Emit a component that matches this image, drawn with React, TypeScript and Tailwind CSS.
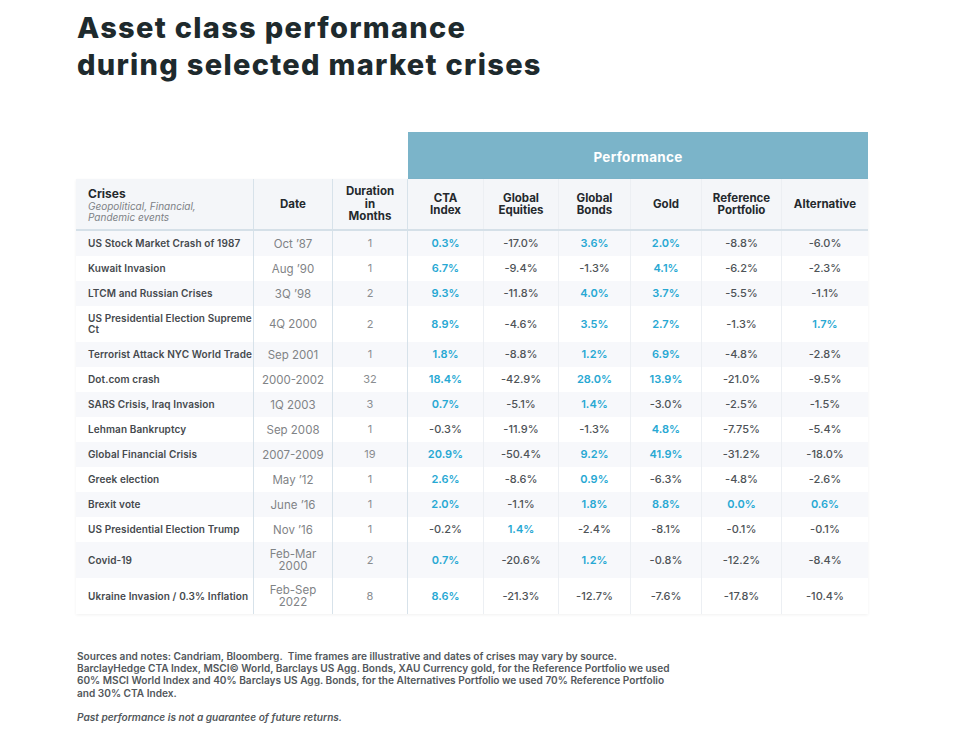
import React from 'react';

type Row = {
  name: string[];
  date: string[];
  months: string;
  values: string[];
  tall?: boolean;
};

const rows: Row[] = [
  { name: ['US Stock Market Crash of 1987'], date: ['Oct ’87'], months: '1', values: ['0.3%', '-17.0%', '3.6%', '2.0%', '-8.8%', '-6.0%'] },
  { name: ['Kuwait Invasion'], date: ['Aug ’90'], months: '1', values: ['6.7%', '-9.4%', '-1.3%', '4.1%', '-6.2%', '-2.3%'] },
  { name: ['LTCM and Russian Crises'], date: ['3Q ’98'], months: '2', values: ['9.3%', '-11.8%', '4.0%', '3.7%', '-5.5%', '-1.1%'] },
  { name: ['US Presidential Election Supreme', 'Ct'], date: ['4Q 2000'], months: '2', values: ['8.9%', '-4.6%', '3.5%', '2.7%', '-1.3%', '1.7%'], tall: true },
  { name: ['Terrorist Attack NYC World Trade'], date: ['Sep 2001'], months: '1', values: ['1.8%', '-8.8%', '1.2%', '6.9%', '-4.8%', '-2.8%'] },
  { name: ['Dot.com crash'], date: ['2000-2002'], months: '32', values: ['18.4%', '-42.9%', '28.0%', '13.9%', '-21.0%', '-9.5%'] },
  { name: ['SARS Crisis, Iraq Invasion'], date: ['1Q 2003'], months: '3', values: ['0.7%', '-5.1%', '1.4%', '-3.0%', '-2.5%', '-1.5%'] },
  { name: ['Lehman Bankruptcy'], date: ['Sep 2008'], months: '1', values: ['-0.3%', '-11.9%', '-1.3%', '4.8%', '-7.75%', '-5.4%'] },
  { name: ['Global Financial Crisis'], date: ['2007-2009'], months: '19', values: ['20.9%', '-50.4%', '9.2%', '41.9%', '-31.2%', '-18.0%'] },
  { name: ['Greek election'], date: ['May ’12'], months: '1', values: ['2.6%', '-8.6%', '0.9%', '-6.3%', '-4.8%', '-2.6%'] },
  { name: ['Brexit vote'], date: ['June ’16'], months: '1', values: ['2.0%', '-1.1%', '1.8%', '8.8%', '0.0%', '0.6%'] },
  { name: ['US Presidential Election Trump'], date: ['Nov ’16'], months: '1', values: ['-0.2%', '1.4%', '-2.4%', '-8.1%', '-0.1%', '-0.1%'] },
  { name: ['Covid-19'], date: ['Feb-Mar', '2000'], months: '2', values: ['0.7%', '-20.6%', '1.2%', '-0.8%', '-12.2%', '-8.4%'], tall: true },
  { name: ['Ukraine Invasion / 0.3% Inflation'], date: ['Feb-Sep', '2022'], months: '8', values: ['8.6%', '-21.3%', '-12.7%', '-7.6%', '-17.8%', '-10.4%'], tall: true },
];

const perfHeads = [
  ['CTA', 'Index'],
  ['Global', 'Equities'],
  ['Global', 'Bonds'],
  ['Gold'],
  ['Reference', 'Portfolio'],
  ['Alternative'],
];

const grid = 'grid grid-cols-[178px_79px_75px_76px_75px_72px_71px_80px_86px]';
const major = 'border-r border-[#d7e2ea]';
const minor = 'border-r border-[#eceff3]';

export default function App() {
  return (
    <div className="w-[960px] h-[747px] bg-white font-['Inter',sans-serif] overflow-hidden">
      {/* Title */}
      <h1 className="pl-[77px] pt-[9px] text-[29px] leading-[37px] font-extrabold tracking-[1.3px] text-[#1e2a2d]">
        Asset class performance
        <br />
        during selected market crises
      </h1>

      {/* Table */}
      <div className="ml-[76px] mt-[49px] w-[792px]">
        <div className="ml-[332px] h-[47px] bg-[#7bb4c9] flex items-center justify-center pt-[3px] text-[13.5px] font-bold tracking-[0.3px] text-white">
          Performance
        </div>
        <div className="shadow-[0_1px_3px_rgba(0,0,0,0.06)]">
          <div className={`${grid} h-[52px] bg-[#f4f6f9] border-b-2 border-[#d5e0e8] text-[11.5px] leading-[12.5px] font-bold text-[#24292d]`}>
            <div className={`${major} pl-3 pt-[3px] flex flex-col justify-center`}>
              <div className="text-[12px]">Crises</div>
              <div className="text-[10px] leading-[11px] font-normal italic text-[#7d8185]">Geopolitical, Financial,</div>
              <div className="text-[10px] leading-[11px] font-normal italic text-[#7d8185]">Pandemic events</div>
            </div>
            <div className={`${major} flex items-center justify-center`}>Date</div>
            <div className={`${major} flex flex-col items-center justify-center text-center`}>
              <div>Duration</div>
              <div>in</div>
              <div>Months</div>
            </div>
            {perfHeads.map((h, i) => (
              <div
                key={i}
                className={`${i < perfHeads.length - 1 ? minor : ''} flex flex-col items-center justify-center text-center`}
              >
                {h.map((l) => (
                  <div key={l}>{l}</div>
                ))}
              </div>
            ))}
          </div>

          {rows.map((r, idx) => (
            <div
              key={r.name[0]}
              className={`${grid} ${r.tall ? 'h-[36px]' : 'h-[25px]'} ${idx % 2 === 0 ? 'bg-[#f7f8fb]' : 'bg-white'} text-[11px]`}
            >
              <div className={`${major} pl-3 flex flex-col justify-center whitespace-nowrap text-[10px] tracking-[0.1px] font-semibold leading-[11px] text-[#45494d]`}>
                {r.name.map((n) => (
                  <div key={n}>{n}</div>
                ))}
              </div>
              <div className={`${major} flex flex-col items-center justify-center leading-[12px] text-[11.5px] text-[#7f8386]`}>
                {r.date.map((d) => (
                  <div key={d}>{d}</div>
                ))}
              </div>
              <div className={`${major} flex items-center justify-center text-[11px] text-[#8a8d90]`}>{r.months}</div>
              {r.values.map((v, i) => (
                <div
                  key={i}
                  className={`${i < r.values.length - 1 ? minor : ''} flex items-center justify-center ${
                    v.startsWith('-') ? 'font-medium text-[#4e5357]' : 'font-semibold text-[#27a8d3]'
                  }`}
                >
                  {v}
                </div>
              ))}
            </div>
          ))}
        </div>
      </div>

      {/* Notes */}
      <div className="pl-[77px] mt-[36px] text-[10.1px] leading-[12.2px] font-semibold text-[#52575b]">
        <p>
          Sources and notes: Candriam, Bloomberg.&nbsp; Time frames are illustrative and dates of crises may vary by source.
          <br />
          BarclayHedge CTA Index, MSCI© World, Barclays US Agg. Bonds, XAU Currency gold, for the Reference Portfolio we used
          <br />
          60% MSCI World Index and 40% Barclays US Agg. Bonds, for the Alternatives Portfolio we used 70% Reference Portfolio
          <br />
          and 30% CTA Index.
        </p>
        <p className="mt-[12px] italic">Past performance is not a guarantee of future returns.</p>
      </div>
    </div>
  );
}
